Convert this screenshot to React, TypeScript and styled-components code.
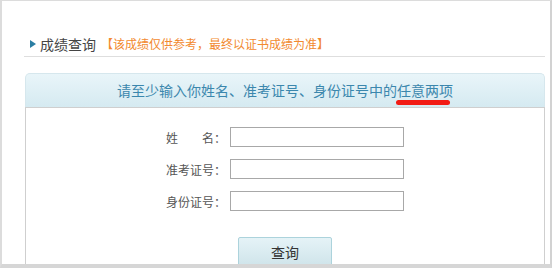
import React from "react";
import styled, { createGlobalStyle } from "styled-components";

const GlobalStyle = createGlobalStyle`
  html, body {
    margin: 0;
    padding: 0;
    background: #fff;
  }
  body {
    font-family: "Noto Sans CJK SC", "Noto Sans", sans-serif;
  }
`;

const Frame = styled.div`
  box-sizing: border-box;
  width: 552px;
  height: 268px;
  overflow: hidden;
  background: #fff;
  border-left: 2px solid #dcdcdc;
  border-top: 1px solid #dcdcdc;
  border-right: 2px solid #d2d2d2;
  border-bottom: 4px solid #d6d6d6;
  padding: 0 5px 0 22px;
`;

const Header = styled.div`
  box-sizing: border-box;
  height: 56px;
  display: flex;
  align-items: flex-end;
  padding: 0 0 2px 6px;
  border-bottom: 1px solid #dedede;
`;

const Arrow = styled.span`
  width: 0;
  height: 0;
  border-top: 4px solid transparent;
  border-bottom: 4px solid transparent;
  border-left: 6px solid #2b7ea3;
  margin: 0 4px 6px 0;
`;

const Title = styled.span`
  font-size: 14px;
  line-height: 20px;
  color: #444;
`;

const Notice = styled.span`
  font-size: 12px;
  line-height: 20px;
  color: #f28a30;
  margin-left: 5px;
`;

const Panel = styled.div`
  margin-top: 16px;
  width: 520px;
  margin-left: 1px;
`;

const PanelHead = styled.div`
  box-sizing: border-box;
  height: 34px;
  border: 1px solid #d6e7ed;
  border-bottom: none;
  border-radius: 5px 5px 0 0;
  background: linear-gradient(#e9f5f9, #d5eaf1);
  text-align: center;
  font-size: 14px;
  line-height: 33px;
  color: #3b87ad;
`;

const Mark = styled.span`
  position: relative;
  &::after {
    content: "";
    position: absolute;
    left: -1px;
    right: 3px;
    top: 20px;
    height: 5px;
    border-radius: 3px;
    background: #f21b14;
  }
`;

const PanelBody = styled.div`
  box-sizing: border-box;
  height: 160px;
  border: 1px solid #cfcfcf;
  border-bottom: none;
  padding-top: 19px;
  display: flex;
  flex-direction: column;
  align-items: center;
`;

const Form = styled.div`
  display: flex;
  flex-direction: column;
  gap: 12px;
`;

const Row = styled.label`
  display: flex;
  align-items: center;
  height: 20px;
`;

const Label = styled.span`
  width: 60px;
  margin-right: 4px;
  text-align: right;
  font-size: 12px;
  color: #555;
  white-space: pre;
`;

const Input = styled.input`
  box-sizing: border-box;
  width: 174px;
  height: 20px;
  border: 1px solid #a8a8a8;
  margin: 0;
  padding: 0 4px;
  outline: none;
`;

const Button = styled.button`
  box-sizing: border-box;
  margin-top: 26px;
  width: 94px;
  height: 30px;
  border: 1px solid #acd3dc;
  border-radius: 2px;
  background: linear-gradient(#e5f3f7, #cfe4ea);
  font-family: "Noto Sans CJK SC", sans-serif;
  font-size: 14px;
  color: #333;
  padding: 0;
  cursor: pointer;
`;

const fields = ["姓　　名：", "准考证号：", "身份证号："];

export default function App() {
  return (
    <>
      <GlobalStyle />
      <Frame>
        <Header>
          <Arrow />
          <Title>成绩查询</Title>
          <Notice>【该成绩仅供参考，最终以证书成绩为准】</Notice>
        </Header>
        <Panel>
          <PanelHead>
            请至少输入你姓名、准考证号、身份证号中的<Mark>任意两项</Mark>
          </PanelHead>
          <PanelBody>
            <Form>
              {fields.map((f) => (
                <Row key={f}>
                  <Label>{f}</Label>
                  <Input type="text" />
                </Row>
              ))}
            </Form>
            <Button>查询</Button>
          </PanelBody>
        </Panel>
      </Frame>
    </>
  );
}
